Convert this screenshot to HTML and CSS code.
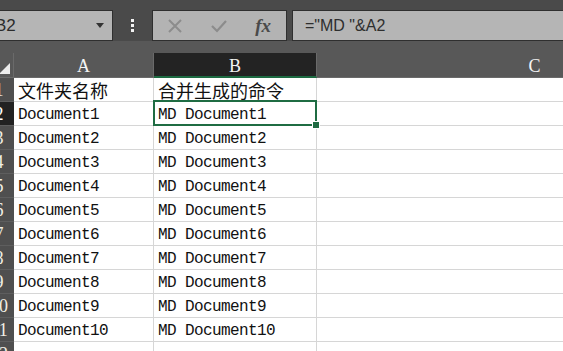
FILE: index.html
```html
<!DOCTYPE html>
<html lang="zh">

<head>
    <meta charset="UTF-8">
    <meta name="viewport" content="width=device-width, initial-scale=1.0">
    <title>合并生成的命令</title>
    <link rel="stylesheet" href="styles.css">
</head>

<body>
    <div class="app">
        <!-- 编辑栏 -->
        <div class="toolbar">
            <div class="namebox">
                <span class="ref">B2</span>
                <span class="caret"></span>
            </div>
            <div class="grip"><i></i><i></i><i></i></div>
            <div class="fbtns">
                <svg class="ico" width="16" height="16" viewBox="0 0 16 16">
                    <path d="M2 2 L14 14 M14 2 L2 14" stroke="#8c8c8c" stroke-width="2" fill="none" />
                </svg>
                <svg class="ico" width="18" height="16" viewBox="0 0 18 16">
                    <path d="M2 8 L7 13 L16 3" stroke="#8c8c8c" stroke-width="2.2" fill="none" />
                </svg>
                <span class="fx">fx</span>
            </div>
            <div class="finput">="MD "&amp;A2</div>
        </div><!-- .toolbar end -->
        <div class="band"></div>

        <!-- 表格 -->
        <div class="sheet">
            <div class="corner"><span class="tri"></span></div>
            <div class="colhead">A</div>
            <div class="colhead sel">B</div>
            <div class="colhead">C</div>

            <div class="rowhead">1</div>
            <div class="cell cjk">文件夹名称</div>
            <div class="cell cjk">合并生成的命令</div>
            <div class="cell"></div>

            <div class="rowhead sel">2</div>
            <div class="cell">Document1</div>
            <div class="cell active">MD Document1<span class="selbox"><span class="handle"></span></span></div>
            <div class="cell"></div>

            <div class="rowhead">3</div>
            <div class="cell">Document2</div>
            <div class="cell">MD Document2</div>
            <div class="cell"></div>

            <div class="rowhead">4</div>
            <div class="cell">Document3</div>
            <div class="cell">MD Document3</div>
            <div class="cell"></div>

            <div class="rowhead">5</div>
            <div class="cell">Document4</div>
            <div class="cell">MD Document4</div>
            <div class="cell"></div>

            <div class="rowhead">6</div>
            <div class="cell">Document5</div>
            <div class="cell">MD Document5</div>
            <div class="cell"></div>

            <div class="rowhead">7</div>
            <div class="cell">Document6</div>
            <div class="cell">MD Document6</div>
            <div class="cell"></div>

            <div class="rowhead">8</div>
            <div class="cell">Document7</div>
            <div class="cell">MD Document7</div>
            <div class="cell"></div>

            <div class="rowhead">9</div>
            <div class="cell">Document8</div>
            <div class="cell">MD Document8</div>
            <div class="cell"></div>

            <div class="rowhead">10</div>
            <div class="cell">Document9</div>
            <div class="cell">MD Document9</div>
            <div class="cell"></div>

            <div class="rowhead">11</div>
            <div class="cell">Document10</div>
            <div class="cell">MD Document10</div>
            <div class="cell"></div>

            <div class="rowhead">12</div>
            <div class="cell"></div>
            <div class="cell"></div>
            <div class="cell"></div>
        </div><!-- .sheet end -->
    </div><!-- .app end -->
</body>

</html>
```

FILE: styles.css
```css
* {
    margin: 0;
    padding: 0;
    box-sizing: border-box;
}

body {
    width: 563px;
    height: 351px;
    overflow: hidden;
    background-color: #fff;
}

.app {
    width: 563px;
    overflow: hidden;
}

/* 编辑栏 */
.toolbar {
    display: flex;
    height: 41px;
    padding-top: 10px;
    background-color: #4a4a4a;
}

.namebox {
    margin-left: -16px;
    width: 129px;
    flex: none;
    display: flex;
    align-items: center;
    justify-content: space-between;
    padding: 0 8px 0 10px;
    background-color: #b5b5b5;
    border: 1px solid #2f2f2f;
    font-family: "Liberation Sans", sans-serif;
    font-size: 17px;
    color: #2b2b2b;
}

.namebox .caret {
    width: 0;
    height: 0;
    border-left: 4px solid transparent;
    border-right: 4px solid transparent;
    border-top: 5px solid #333;
}

.grip {
    width: 39px;
    flex: none;
    display: flex;
    flex-direction: column;
    align-items: center;
    justify-content: center;
    gap: 2px;
}

.grip i {
    display: block;
    width: 3px;
    height: 3px;
    background-color: #f2f2f2;
}

.fbtns {
    width: 135px;
    flex: none;
    display: flex;
    align-items: center;
    justify-content: space-between;
    padding: 0 15px 0 14px;
    background-color: #b3b3b3;
    border: 1px solid #2f2f2f;
}

.fbtns .fx {
    font-family: "Liberation Serif", serif;
    font-style: italic;
    font-weight: bold;
    font-size: 19px;
    color: #4a4a4a;
}

.finput {
    flex: 1;
    margin-left: 5px;
    margin-right: -4px;
    display: flex;
    align-items: center;
    padding-left: 12px;
    background-color: #b5b5b5;
    border: 1px solid #2f2f2f;
    font-family: "Liberation Sans", sans-serif;
    font-size: 16px;
    color: #2e2e2e;
}

.band {
    height: 12px;
    background-color: #585858;
}

/* 表格 */
.sheet {
    margin-left: -16px;
    display: grid;
    grid-template-columns: 30px 140px 163px 436px;
    grid-auto-rows: 24px;
    grid-template-rows: 25px;
    width: 769px;
}

.corner {
    position: relative;
    background-color: #585858;
    border-right: 1px solid #6a6a6a;
    border-bottom: 1px solid #6a6a6a;
}

.corner .tri {
    position: absolute;
    right: 3px;
    bottom: 3px;
    width: 0;
    height: 0;
    border-left: 11px solid transparent;
    border-bottom: 11px solid #ececec;
}

.colhead {
    display: flex;
    align-items: center;
    justify-content: center;
    padding-top: 3px;
    background-color: #585858;
    border-right: 1px solid #6a6a6a;
    border-bottom: 1px solid #6a6a6a;
    font-family: "Liberation Serif", serif;
    font-size: 18px;
    color: #f4f4f4;
}

.colhead.sel {
    background-color: #232323;
    border-bottom: 2px solid #1d6b42;
}

.rowhead {
    display: flex;
    align-items: center;
    justify-content: center;
    padding-top: 2px;
    overflow: hidden;
    background-color: #4f4f4f;
    border-bottom: 1px solid #5e5e5e;
    font-family: "Liberation Serif", serif;
    font-size: 18px;
    color: #f2efe4;
}

.rowhead.sel {
    background-color: #222;
    color: #fff;
}

.cell {
    display: flex;
    align-items: center;
    padding: 3px 0 0 4px;
    white-space: nowrap;
    border-right: 1px solid #d6d6d6;
    border-bottom: 1px solid #d6d6d6;
    font-family: "Liberation Mono", "Noto Sans CJK SC", monospace;
    font-size: 16px;
    letter-spacing: -0.6px;
    color: #111;
}

.cell.cjk {
    padding-top: 0;
    font-family: "Noto Sans CJK SC", sans-serif;
    font-size: 18px;
    letter-spacing: 0;
}

.cell.active {
    position: relative;
}

.selbox {
    position: absolute;
    top: -2px;
    left: -1px;
    right: -1px;
    bottom: -1px;
    border: 2px solid #1f6c43;
}

.selbox .handle {
    position: absolute;
    right: -4px;
    bottom: -4px;
    width: 6px;
    height: 6px;
    background-color: #1f6c43;
    outline: 1px solid #fff;
}
```
